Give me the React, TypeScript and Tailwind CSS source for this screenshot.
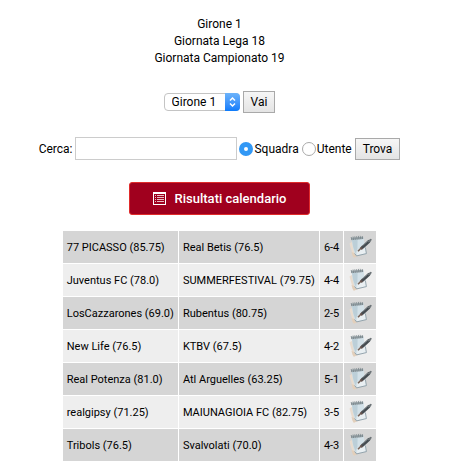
const matches = [
  { home: '77 PICASSO (85.75)', away: 'Real Betis (76.5)', score: '6-4' },
  { home: 'Juventus FC (78.0)', away: 'SUMMERFESTIVAL (79.75)', score: '4-4' },
  { home: 'LosCazzarones (69.0)', away: 'Rubentus (80.75)', score: '2-5' },
  { home: 'New Life (76.5)', away: 'KTBV (67.5)', score: '4-2' },
  { home: 'Real Potenza (81.0)', away: 'Atl Arguelles (63.25)', score: '5-1' },
  { home: 'realgipsy (71.25)', away: 'MAIUNAGIOIA FC (82.75)', score: '3-5' },
  { home: 'Tribols (76.5)', away: 'Svalvolati (70.0)', score: '4-3' },
];

function NotepadIcon() {
  return (
    <svg viewBox="0 0 24 24" className="block size-6" aria-hidden="true">
      {/* Back sheet */}
      <path d="M1.5 8.5 L4.5 6.5 L9 20 L5.5 22.8 Z" fill="#e9dccf" />
      <path d="M3.5 17 L12 20 L6 22.8 L4.6 21 Z" fill="#e2cfbb" />
      {/* Pad */}
      <path d="M3.6 3.5 L15.4 2.6 L18.4 18.6 L8.4 21 Q5 18 3.6 3.5 Z" fill="#d3e1e8" />
      <path d="M4 5 L9.6 4.5 L9.4 14 L7.4 18.5 Q4.8 13 4 5 Z" fill="#bccfd8" />
      <path d="M9.6 15 L16.8 10.5 L18 18.2 L9 20.3 Z" fill="#e9eff2" />
      <path d="M6.6 18.5 L8.6 20.9 L18.4 18.6 L17.4 12.5" fill="none" stroke="#84969f" strokeWidth="0.8" />
      {/* Spiral */}
      <path d="M3.4 3.8 L15.2 2.8" stroke="#9aa6ab" strokeWidth="2.2" />
      <path
        d="M3.8 5.2L3.2 2M5.6 5L5 1.5M7.4 4.8L6.8 1.3M9.2 4.6L8.6 1.1M11 4.4L10.4 0.9M12.8 4.2L12.2 0.8M14.6 4L14.2 1"
        stroke="#707d83"
        strokeWidth="0.7"
      />
      {/* Pen */}
      <path d="M10 16.2 L13.4 12.8" stroke="#776358" strokeWidth="1.6" />
      <path d="M12.8 14 L15.2 11.6" stroke="#665450" strokeWidth="2.8" />
      <path d="M15 11.8 L21 6.4" stroke="#454c51" strokeWidth="3" strokeLinecap="round" />
      <path d="M14.6 10.5 L19.8 5.9" stroke="#969da1" strokeWidth="1" />
      <path d="M20.6 6.4 L22.8 4.8" stroke="#6d7478" strokeWidth="1.8" strokeLinecap="round" />
    </svg>
  );
}

function ListIcon() {
  return (
    <svg viewBox="0 0 13 13" className="size-[13px]" aria-hidden="true" shapeRendering="crispEdges">
      <path d="M0 0H13V13H0Z M1 2V12H12V2Z" fill="#fff" fillRule="evenodd" />
      <path
        d="M2 3h1v1h-1z M2 5h1v1h-1z M2 7h1v1h-1z M2 9h1v1h-1z M4 3h7v1h-7z M4 5h7v1h-7z M4 7h7v1h-7z M4 9h7v1h-7z"
        fill="#fff"
        fillOpacity="0.75"
      />
    </svg>
  );
}

export default function App() {
  return (
    <main className="bg-white pt-4 pr-[18px] font-['Roboto',sans-serif] text-xs text-black">
      <div className="text-center leading-[17px]">
        <p>Girone 1</p>
        <p>Giornata Lega 18</p>
        <p>Giornata Campionato 19</p>
      </div>

      {/* Group picker */}
      <form className="mt-6 flex items-center justify-center gap-[3px]">
        <div className="relative">
          <select
            aria-label="Girone"
            className="block h-[18px] w-[76px] appearance-none rounded border border-[#c4c4c4] bg-white pl-[7px] leading-4"
          >
            <option>Girone 1</option>
          </select>
          <span className="pointer-events-none absolute inset-y-0 right-0 flex w-[15px] items-center justify-center rounded-r bg-linear-to-b from-[#6cb3fa] to-[#0a7bfb]">
            <svg viewBox="0 0 7 10" className="h-[10px] w-[7px]" fill="none" stroke="#fff" strokeWidth="1.4" aria-hidden="true">
              <path d="M1 3.6 L3.5 1 L6 3.6 M1 6.4 L3.5 9 L6 6.4" />
            </svg>
          </span>
        </div>
        <button type="button" className="h-[22px] border border-[#a9a9a9] bg-linear-to-b from-[#f6f6f6] to-[#e4e4e4] px-[7px]">
          Vai
        </button>
      </form>

      {/* Search */}
      <form className="mt-6 flex items-center justify-center">
        <label htmlFor="cerca">Cerca:</label>
        <input id="cerca" type="text" className="ml-[3px] h-[23px] w-[162px] border border-[#ccc] bg-white px-1" />
        <label className="ml-[2px] flex items-center">
          <input
            type="radio"
            name="tipo"
            defaultChecked
            className="mr-px size-[14px] appearance-none rounded-full border border-[#aaa] bg-white checked:border-5 checked:border-[#3298f5]"
          />
          Squadra
        </label>
        <label className="ml-[3px] flex items-center">
          <input
            type="radio"
            name="tipo"
            className="mr-px size-[14px] appearance-none rounded-full border border-[#aaa] bg-white checked:border-5 checked:border-[#3298f5]"
          />
          Utente
        </label>
        <button type="button" className="ml-[3px] h-[22px] border border-[#a9a9a9] bg-linear-to-b from-[#f6f6f6] to-[#e4e4e4] px-[7px]">
          Trova
        </button>
      </form>

      <div className="mt-[22px] flex justify-center">
        <a
          href="#calendario"
          className="flex h-[33px] items-center gap-[9px] rounded-[3px] border border-[#e02b2b] bg-[#a0001e] px-[23px] text-[13px] font-medium text-white"
        >
          <ListIcon />
          Risultati calendario
        </a>
      </div>

      {/* Results */}
      <table className="mx-auto mt-[15px] border-separate border-spacing-px text-[11px] whitespace-nowrap">
        <tbody>
          {matches.map((match) => (
            <tr key={match.home} className="h-8 odd:bg-[#d5d5d5] even:bg-[#eee]">
              <td className="px-1 pt-0.5">{match.home}</td>
              <td className="px-1 pt-0.5">{match.away}</td>
              <td className="px-1 pt-0.5">{match.score}</td>
              <td className="p-1">
                <a href="#dettaglio" aria-label="Dettaglio partita" className="block">
                  <NotepadIcon />
                </a>
              </td>
            </tr>
          ))}
        </tbody>
      </table>
    </main>
  );
}
